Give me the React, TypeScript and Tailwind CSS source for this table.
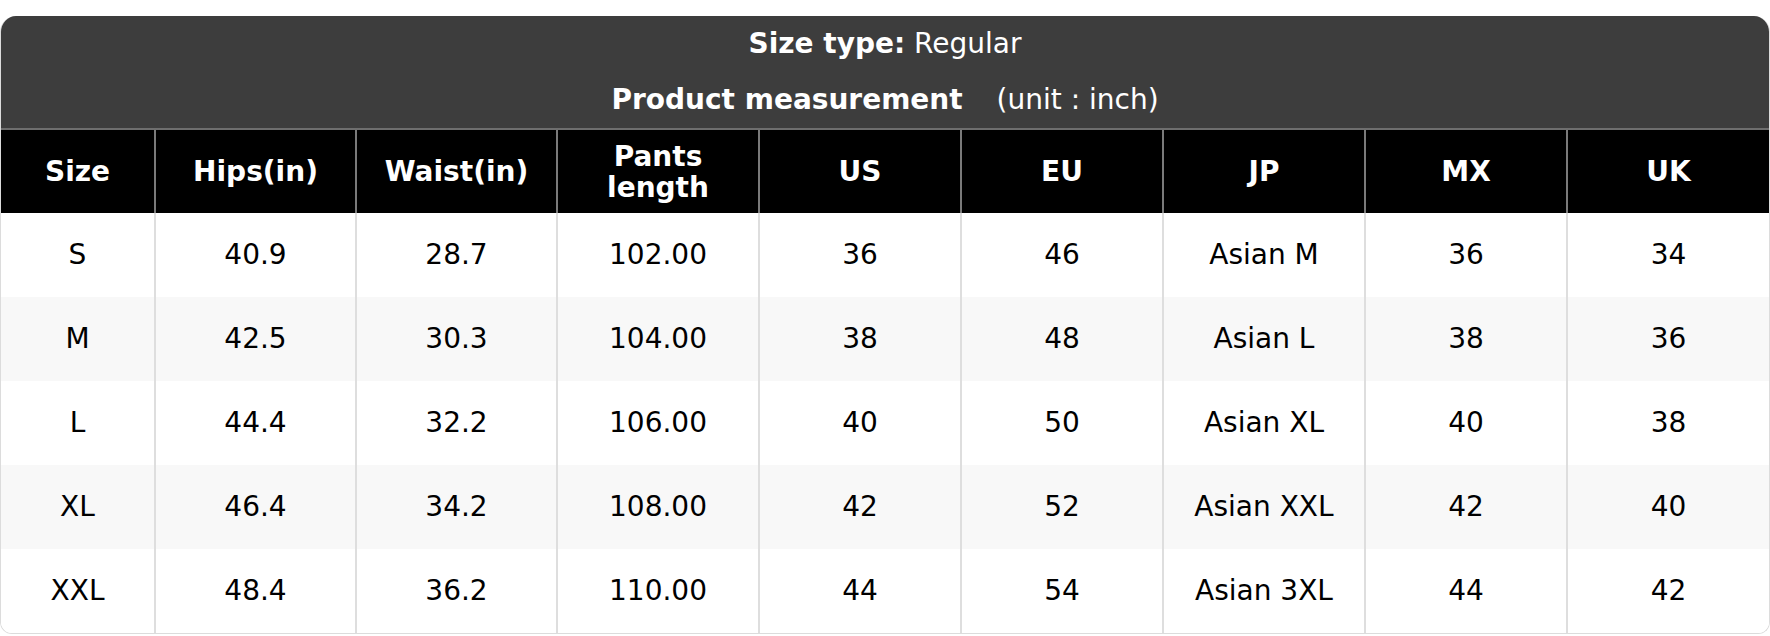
const columns = ["Size", "Hips(in)", "Waist(in)", "Pants\nlength", "US", "EU", "JP", "MX", "UK"];

const rows: string[][] = [
  ["S", "40.9", "28.7", "102.00", "36", "46", "Asian M", "36", "34"],
  ["M", "42.5", "30.3", "104.00", "38", "48", "Asian L", "38", "36"],
  ["L", "44.4", "32.2", "106.00", "40", "50", "Asian XL", "40", "38"],
  ["XL", "46.4", "34.2", "108.00", "42", "52", "Asian XXL", "42", "40"],
  ["XXL", "48.4", "36.2", "110.00", "44", "54", "Asian 3XL", "44", "42"],
];

const gridCols =
  "grid grid-cols-[153px_201px_201px_202px_202px_202px_202px_202px_minmax(0,1fr)]";

export default function App() {
  return (
    <div className="bg-white pt-4 font-['DejaVu_Sans',sans-serif] text-[28px]">
      <div className="overflow-hidden rounded-t-2xl rounded-b-xl border border-t-0 border-[#dcdcdc]">
        {/* Title block */}
        <div className="bg-[#3d3d3d] text-center text-white">
          <div className="leading-[56px]">
            <span className="font-bold">Size type:</span> Regular
          </div>
          <div className="leading-[56px]">
            <span className="font-bold">Product measurement</span>
            <span className="ml-[25px]"> (unit : inch)</span>
          </div>
        </div>

        {/* Column headers */}
        <div className={`${gridCols} border-t-2 border-[#6e6e6e] bg-black text-white`}>
          {columns.map((col, i) => (
            <div
              key={col}
              className={`flex h-[83px] items-center justify-center whitespace-pre-line text-center font-bold leading-[31px] ${
                i > 0 ? "border-l-2 border-[#7a7a7a]" : ""
              }`}
            >
              {col}
            </div>
          ))}
        </div>

        {/* Body rows */}
        {rows.map((row, r) => (
          <div
            key={row[0]}
            className={`${gridCols} text-black ${r % 2 === 1 ? "bg-[#f8f8f8]" : "bg-white"}`}
          >
            {row.map((cell, i) => (
              <div
                key={i}
                className={`flex h-[84px] items-center justify-center ${
                  i > 0 ? "border-l-2 border-[#dedede]" : ""
                }`}
              >
                {cell}
              </div>
            ))}
          </div>
        ))}
      </div>
    </div>
  );
}
